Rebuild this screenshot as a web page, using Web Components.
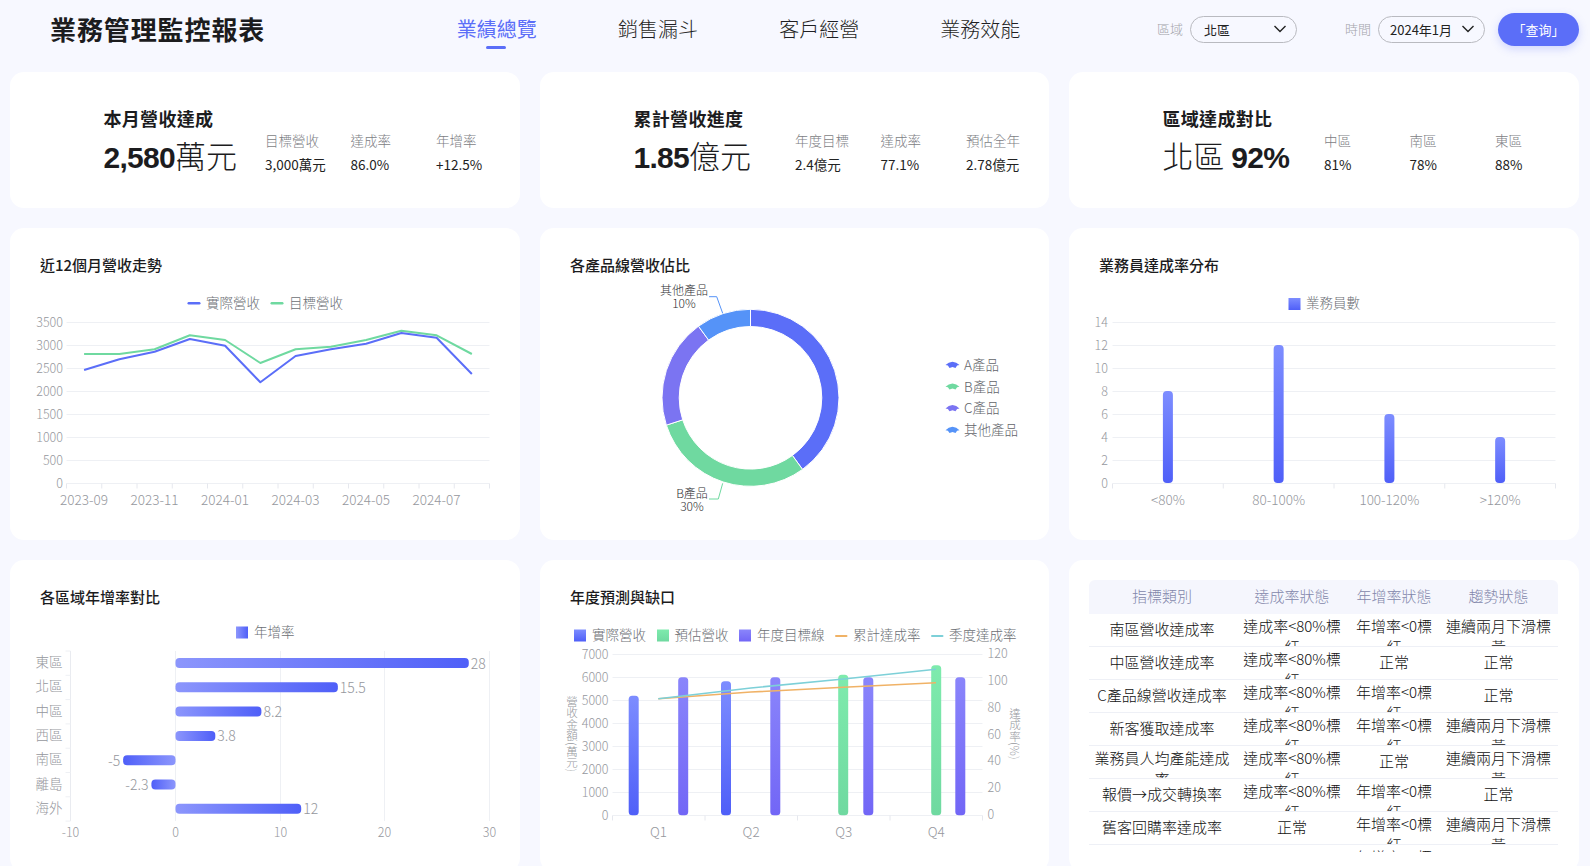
<!DOCTYPE html>
<html lang="zh-Hant">
<head>
<meta charset="utf-8">
<title>業務管理監控報表</title>
<style>
html,body{margin:0;padding:0;height:866px;overflow:hidden;background:#f7f8ff;font-family:"Noto Sans CJK TC","Noto Sans CJK SC",sans-serif;color:#222}
</style>
</head>
<body>
<dash-board>
  <dash-header slot="header">
    <nav-tab active>業績總覽</nav-tab>
    <nav-tab>銷售漏斗</nav-tab>
    <nav-tab>客戶經營</nav-tab>
    <nav-tab>業務效能</nav-tab>
  </dash-header>
  <kpi-card heading="本月營收達成" num="2,580" unit="萬元" stats="目標營收|3,000萬元;達成率|86.0%;年增率|+12.5%"></kpi-card>
  <kpi-card heading="累計營收進度" num="1.85" unit="億元" stats="年度目標|2.4億元;達成率|77.1%;預估全年|2.78億元"></kpi-card>
  <kpi-card heading="區域達成對比" unit="北區 " num="92%" lead stats="中區|81%;南區|78%;東區|88%"></kpi-card>
  <chart-card heading="近12個月營收走勢"><trend-chart></trend-chart></chart-card>
  <chart-card heading="各產品線營收佔比"><share-chart></share-chart></chart-card>
  <chart-card heading="業務員達成率分布"><rep-chart></rep-chart></chart-card>
  <chart-card heading="各區域年增率對比"><growth-chart></growth-chart></chart-card>
  <chart-card heading="年度預測與缺口"><forecast-chart></forecast-chart></chart-card>
  <status-table></status-table>
</dash-board>
<script>
const FONT='"Noto Sans CJK TC","Noto Sans CJK SC",sans-serif';
const GRID='#eef0f4', AXIS='#95979d', LEG='#6c6f75';
function shadow(el,html){el.attachShadow({mode:'open'}).innerHTML=html;}
function esc(s){return String(s).replace(/&/g,'&amp;').replace(/</g,'&lt;').replace(/>/g,'&gt;');}
function t(x,y,s,o={}){return `<text x="${x}" y="${y-1}" dominant-baseline="central" text-anchor="${o.a||'start'}" font-size="${o.s||13}" fill="${o.f||AXIS}">${esc(s)}</text>`;}
function hl(y,x1,x2,c=GRID){return `<line x1="${x1}" x2="${x2}" y1="${y}" y2="${y}" stroke="${c}"/>`;}
function vl(x,y1,y2,c=GRID){return `<line x1="${x}" x2="${x}" y1="${y1}" y2="${y2}" stroke="${c}"/>`;}
function grad(id,a,b,h){return `<linearGradient id="${id}" x1="0" y1="0" x2="${h?1:0}" y2="${h?0:1}"><stop offset="0" stop-color="${a}"/><stop offset="1" stop-color="${b}"/></linearGradient>`;}
function svg(x,y,body,defs=''){return `<style>:host{display:block;height:264px}svg{display:block;overflow:visible;font-family:${FONT};font-weight:300}</style><svg width="450" height="264" viewBox="${x} ${y} 450 264"><defs>${defs}</defs>${body}</svg>`;}
const LG=13.5;

customElements.define('dash-board',class extends HTMLElement{constructor(){super();shadow(this,`<style>
:host{display:block;width:1590px;box-sizing:border-box;padding:0 10px}
.grid{display:grid;grid-template-columns:510px 509px 510px;column-gap:20px;row-gap:20px;grid-template-rows:136px 312px 312px}
</style><slot name="header"></slot><div class="grid"><slot></slot></div>`);}});

customElements.define('dash-header',class extends HTMLElement{constructor(){super();shadow(this,`<style>
:host{display:flex;align-items:center;box-sizing:border-box;height:72px;padding:0 1px 16px 40px}
h1{margin:0;width:406.8px;font-size:26px;font-weight:700;letter-spacing:.9px;color:#1c1c1e;line-height:36px;flex:none;position:relative;top:1px}
nav{display:flex;gap:81.2px;flex:none;margin-top:1px}
.ctl{margin-left:auto;display:flex;align-items:center;flex:none;position:relative;top:1px}
.lab{font-size:13px;color:#a4a5ab;margin-right:7px;line-height:20px;font-weight:300}
.btn{margin-left:13px;width:81px;height:33px;border-radius:17px;background:#5b6ef8;color:#fff;font-size:13px;display:flex;align-items:center;justify-content:center;box-shadow:0 3px 8px rgba(91,110,248,.25)}
filter-select+.lab{margin-left:48px}
</style><h1>業務管理監控報表</h1><nav><slot></slot></nav><div class="ctl"><span class="lab">區域</span><filter-select wide>北區</filter-select><span class="lab">時間</span><filter-select>2024年1月</filter-select><div class="btn">「查询」</div></div>`);}});

customElements.define('nav-tab',class extends HTMLElement{constructor(){super();shadow(this,`<style>
:host{display:block;position:relative;width:80px;font-size:20px;line-height:28px;color:#1f1f23;text-align:center;font-weight:300}
:host([active]){color:#5b6ef8;font-weight:400}
:host([active])::after{content:"";position:absolute;left:29px;top:31.5px;width:20px;height:3px;border-radius:2px;background:#5b6ef8}
</style><slot></slot>`);}});

customElements.define('filter-select',class extends HTMLElement{constructor(){super();shadow(this,`<style>
:host{display:flex;align-items:center;justify-content:space-between;box-sizing:border-box;width:107px;height:27px;border:1px solid #b9bac0;border-radius:14px;background:#fff0;padding:0 9px 0 11px;font-size:13px;color:#222}
:host([wide]){padding-left:13px}
svg{display:block;flex:none}
</style><slot></slot><svg width="14" height="8" viewBox="0 0 14 8"><path d="M1.5 1 L7 6.5 L12.5 1" fill="none" stroke="#222" stroke-width="1.4"/></svg>`);}});

customElements.define('kpi-card',class extends HTMLElement{constructor(){super();
const stats=(this.getAttribute('stats')||'').split(';').map(s=>s.split('|'));
const num=`<b>${this.getAttribute('num')}</b>`,unit=`<span>${this.getAttribute('unit')}</span>`;
shadow(this,`<style>
:host{display:grid;grid-template-columns:161.5px 1fr;box-sizing:border-box;padding:33px 0 0 93.5px;background:#fff;border-radius:14px;height:136px}
h2{margin:0;font-size:18px;font-weight:700;letter-spacing:.3px;line-height:26px;color:#1c1c1e}
.v{margin-top:4px;line-height:40px;font-size:31px;white-space:pre;color:#1c1c1e;font-weight:300}
.v b{font-weight:700;font-size:30px;font-family:"Liberation Sans",sans-serif;letter-spacing:-.7px}
.s{display:grid;grid-template-columns:repeat(3,85.5px);margin-top:25px}
.l{font-size:13.5px;color:#7d7e84;line-height:20px;font-weight:300}
.n{font-size:13.5px;color:#222;line-height:20px;margin-top:4px;font-weight:400}
</style><div><h2>${this.getAttribute('heading')}</h2><div class="v">${this.hasAttribute('lead')?unit+num:num+unit}</div></div>
<div class="s">${stats.map(s=>`<div><div class="l">${s[0]}</div><div class="n">${s[1]}</div></div>`).join('')}</div>`);}});

customElements.define('chart-card',class extends HTMLElement{constructor(){super();shadow(this,`<style>
:host{display:block;box-sizing:border-box;padding:26px 30px 0;background:#fff;border-radius:14px;height:312px;min-width:0}
h3{margin:0;font-size:15px;font-weight:500;line-height:22px;color:#1c1c1e}
</style><h3>${this.getAttribute('heading')}</h3><slot></slot>`);}});

customElements.define('trend-chart',class extends HTMLElement{constructor(){super();
let b='';const ys=[322,345,368,391,414,437,460,483],lab=[3500,3000,2500,2000,1500,1000,500,0];
ys.forEach((y,i)=>{b+=hl(y+.5,66.5,489.5)+t(63,y+.5,lab[i],{a:'end',s:12.5})});
for(let i=0;i<=12;i++){const x=66.5+i*35.25;b+=vl(x,483.5,488.5,'#e6e8ee');}
['2023-09','2023-11','2024-01','2024-03','2024-05','2024-07'].forEach((s,i)=>{b+=t(84+i*70.5,500,s,{a:'middle',s:13.5})});
const px=i=>84.1+i*35.25;
const A=[370,359.3,351.7,339,345.7,382.3,356,349.3,343.7,333,337.7,374];
const T=[354,354,349.3,335.3,340,363,349.3,346.7,340,330.7,335.3,354];
const pl=(a,c)=>`<polyline fill="none" stroke="${c}" stroke-width="2" stroke-linejoin="round" points="${a.map((y,i)=>px(i)+','+y).join(' ')}"/>`;
b+=pl(T,'#6fd9a0')+pl(A,'#5b6ef8');
b+=`<rect x="187.5" y="302" width="13" height="2.4" rx="1.2" fill="#5b6ef8"/>`+t(206,303,'實際營收',{f:LEG,s:LG});
b+=`<rect x="270.5" y="302" width="13" height="2.4" rx="1.2" fill="#6fd9a0"/>`+t(289,303,'目標營收',{f:LEG,s:LG});
shadow(this,svg(40,276,b));}});

customElements.define('share-chart',class extends HTMLElement{constructor(){super();
const cx=750.5,cy=397.8,R=88.5,r=71.3;
const pt=(a,rad)=>[(cx+rad*Math.sin(a)).toFixed(2),(cy-rad*Math.cos(a)).toFixed(2)];
const seg=(a0,a1,c)=>{const A0=a0*Math.PI/180,A1=a1*Math.PI/180,l=(a1-a0)>180?1:0,[x0,y0]=pt(A0,R),[x1,y1]=pt(A1,R),[x2,y2]=pt(A1,r),[x3,y3]=pt(A0,r);
return `<path d="M${x0} ${y0}A${R} ${R} 0 ${l} 1 ${x1} ${y1}L${x2} ${y2}A${r} ${r} 0 ${l} 0 ${x3} ${y3}Z" fill="${c}" stroke="#fff" stroke-width="1"/>`;};
const C=['#5b6ef8','#6fd9a0','#7b74f2','#5593f8'];
let b=seg(0,144,C[0])+seg(144,252,C[1])+seg(252,324,C[2])+seg(324,360,C[3]);
b+=`<polyline fill="none" stroke="${C[3]}" points="709,296.7 716.7,296.7 722.7,313.3"/>`;
b+=`<polyline fill="none" stroke="${C[1]}" points="709,499 718.3,499 722.7,483.3"/>`;
b+=t(684,290,'其他產品',{a:'middle',s:12,f:'#2e2e32'})+t(684,303,'10%',{a:'middle',s:12,f:'#2e2e32'});
b+=t(692,493,'B產品',{a:'middle',s:12,f:'#2e2e32'})+t(692,506,'30%',{a:'middle',s:12,f:'#2e2e32'});
['A產品','B產品','C產品','其他產品'].forEach((s,i)=>{const y=365+i*21.7;
b+=`<path transform="translate(945.5 ${y-3.3})" d="M0 3.4Q3 .2 7 0Q11 .2 14 3.4L11.6 3.9L10 6.2L7 5.2L4 6.2L2.4 3.9Z" fill="${C[i]}"/>`+t(964,y,s,{f:'#62646a',s:LG});});
shadow(this,svg(570,276,b));}});

customElements.define('rep-chart',class extends HTMLElement{constructor(){super();
let b='';const ys=[322,345,368,391,414,437,460,483];
ys.forEach((y,i)=>{b+=hl(y+.5,1112.5,1555.5)+t(1108,y+.5,14-i*2,{a:'end',s:12.5})});
for(let i=0;i<=4;i++)b+=vl(1112.5+i*110.75,483.5,488.5,'#e6e8ee');
[['<80%',8],['80-100%',12],['100-120%',6],['>120%',4]].forEach((d,i)=>{const x=1167.9+i*110.75,h=d[1]*11.5;
b+=`<rect x="${x-5}" y="${483-h}" width="10" height="${h}" rx="4" fill="url(#g)"/>`+t(x,500,d[0],{a:'middle',s:13.5});});
b+=`<rect x="1288.5" y="298" width="12" height="12" fill="url(#g)"/>`+t(1306,303,'業務員數',{f:LEG,s:LG});
shadow(this,svg(1099,276,b,grad('g','#7d8dff','#4f5ff8')));}});

customElements.define('growth-chart',class extends HTMLElement{constructor(){super();
let b='';const X=[70.5,175.5,280.5,384.5,489.5],L=[-10,0,10,20,30];
X.forEach((x,i)=>{b+=vl(x,651,821,i==0?'#e9ebf0':GRID)+t(x,832,L[i],{a:'middle',s:12.5});});
for(let i=0;i<=7;i++)b+=hl(651+i*24.3,65.5,70.5,'#eef0f4');
const D=[['東區',28],['北區',15.5],['中區',8.2],['西區',3.8],['南區',-5],['離島',-2.3],['海外',12]];
const U=10.475,Z=175.5;
D.forEach((d,i)=>{const y=663+i*24.3,w=Math.abs(d[1])*U,neg=d[1]<0,x=neg?Z-w:Z;
b+=t(62.5,y-1,d[0],{a:'end',s:13.5});
b+=`<rect x="${x}" y="${y-5}" width="${w}" height="10" rx="4" fill="url(#${neg?'n':'p'})"/>`;
b+=neg?t(x-3,y+.5,d[1],{a:'end',s:14}):t(x+w+2,y+.5,d[1],{s:14});});
b+=`<rect x="236" y="626.5" width="12" height="12" fill="url(#p)"/>`+t(254,632,'年增率',{f:LEG,s:LG});
shadow(this,svg(40,608,b,grad('p','#8c96fc','#4f5ff8',1)+grad('n','#4f5ff8','#8c96fc',1)));}});

customElements.define('forecast-chart',class extends HTMLElement{constructor(){super();
let b='';
for(let i=0;i<8;i++){const y=654.5+i*23;b+=hl(y,612.5,982.5)+t(608.5,y-.5,7000-i*1000,{a:'end',s:12.5});}
for(let i=0;i<7;i++)b+=t(987.5,653.5+i*26.85,120-i*20,{s:12.5});
for(let i=0;i<=4;i++)b+=vl(612.5+i*92.5,815.5,820.5,'#e6e8ee');
['Q1','Q2','Q3','Q4'].forEach((s,i)=>{b+=t(658.5+i*92.6,832,s,{a:'middle',s:13.5});});
const bar=(x,y,f)=>`<rect x="${x-5}" y="${y}" width="10" height="${815.3-y}" rx="3.5" fill="url(#${f})"/>`;
b+=bar(633.7,695.7,'a')+bar(683.2,677.3,'c')+bar(726,681.3,'a')+bar(775.3,677.3,'c')+bar(843.2,674.7,'e')+bar(868.3,677.3,'c')+bar(936.2,665.3,'e')+bar(960.3,677.3,'c');
const xs=[658.3,750.9,843.5,936];
const pl=(a,c)=>`<polyline fill="none" stroke="${c}" stroke-width="1.6" points="${a.map((y,i)=>xs[i]+','+y).join(' ')}"/>`;
b+=pl([698.7,692,687.3,682.7],'#f0b266')+pl([698.7,688,679,669.3],'#7dd0d8');
const sq=(x,f)=>`<rect x="${x}" y="629.5" width="12" height="12" fill="url(#${f})"/>`;
b+=sq(574,'a')+t(592,635.3,'實際營收',{f:LEG,s:LG})+sq(657,'e')+t(674.5,635.3,'預估營收',{f:LEG,s:LG})+sq(739,'c')+t(757,635.3,'年度目標線',{f:LEG,s:LG});
b+=`<rect x="835" y="635" width="12.5" height="2" rx="1" fill="#f0b266"/>`+t(853,635.3,'累計達成率',{f:LEG,s:LG});
b+=`<rect x="931" y="635" width="12.5" height="2" rx="1" fill="#7dd0d8"/>`+t(949,635.3,'季度達成率',{f:LEG,s:LG});
const vt=(x,y,s)=>`<text x="${x}" y="${y}" text-anchor="middle" font-size="11.5" fill="${AXIS}" style="writing-mode:vertical-rl;text-orientation:mixed">${esc(s)}</text>`;
b+=vt(572,734,'營收金額(萬元)')+vt(1015,733.5,'達成率(%)');
shadow(this,svg(570,608,b,grad('a','#7d8dff','#4f5ff8')+grad('c','#8a85fb','#7266f6')+grad('e','#7eebad','#6fd9a0')));}});

customElements.define('status-table',class extends HTMLElement{constructor(){super();
const R='達成率<80%標紅',G='年增率<0標紅',H='連續兩月下滑標黃',N='正常',L='業務員人均產能達成率';
const rows=[['南區營收達成率',R,G,H],['中區營收達成率',R,N,N],['C產品線營收達成率',R,G,N],['新客獲取達成率',R,G,H],[L,R,N,H],['報價→成交轉換率',R,G,N],['舊客回購率達成率',N,G,H],['','',G,'']];
const cell=s=>`<div class="c${[R,G,H,L].includes(s)?' w':''}">${esc(s)}</div>`;
shadow(this,`<style>
:host{display:block;box-sizing:border-box;background:#fff;border-radius:14px;height:312px;padding:20px 21px 20px 20px;min-width:0}
.clip{height:272px;overflow:hidden}
.r{display:grid;grid-template-columns:146px 114px 90px 119px;height:33px;box-sizing:border-box;border-bottom:1px solid #eef0f6;overflow:hidden}
.h{background:#f5f6fd;border-bottom:0;border-radius:6px 6px 0 0;height:33.5px}
.c{box-sizing:border-box;padding:4.5px 4px 0;font-size:15px;line-height:21px;text-align:center;color:#111;overflow:hidden;font-weight:300}
.h .c{color:#8387ab;padding-top:5px}
.w{padding-top:1.5px}
</style><div class="clip"><div class="r h"><div class="c">指標類別</div><div class="c">達成率狀態</div><div class="c">年增率狀態</div><div class="c">趨勢狀態</div></div>
${rows.map(r=>`<div class="r">${r.map(cell).join('')}</div>`).join('')}</div>`);}});
</script>
</body>
</html>
